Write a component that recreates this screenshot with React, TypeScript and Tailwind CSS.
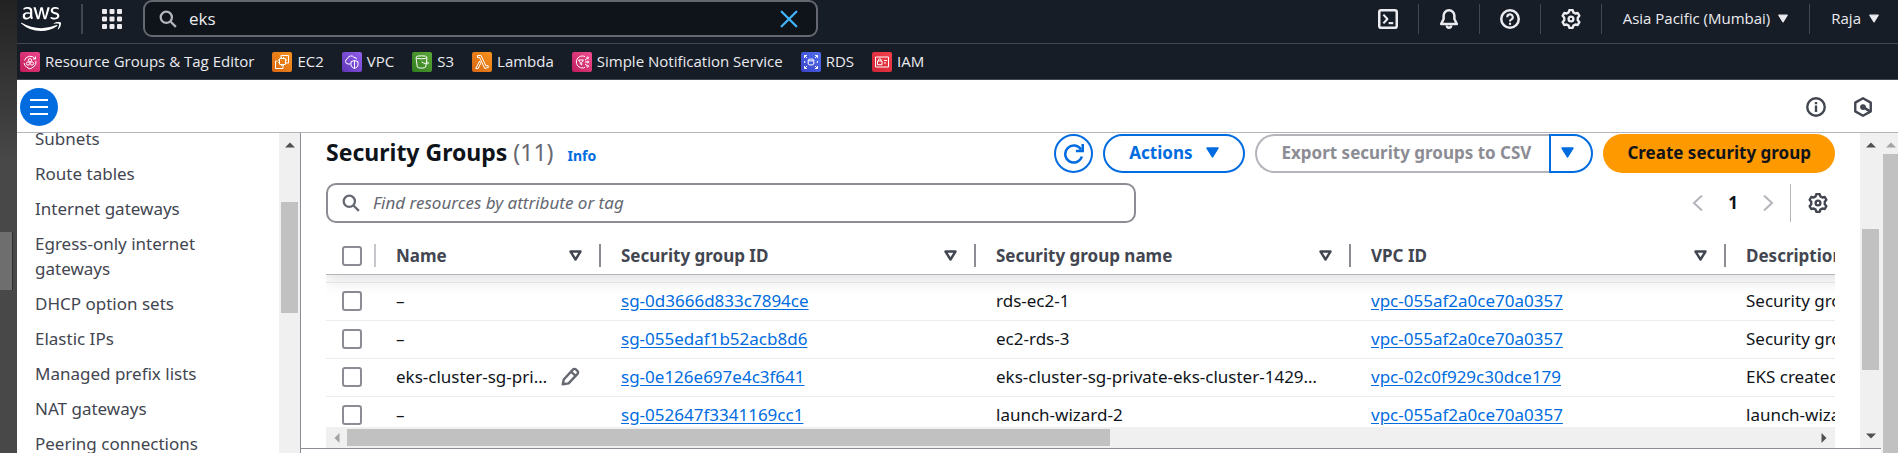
import React from "react";
import type { ReactNode } from "react";
import { FaAws } from "react-icons/fa";

type Favourite = { label: string; tile: string; glyph: ReactNode };

const favourites: Favourite[] = [
  {
    label: "Resource Groups & Tag Editor",
    tile: "bg-linear-to-tr from-[#c2185b] to-[#f0468c]",
    glyph: (
      <>
        <path d="M4.500 8.500A6 6 0 0 1 15.300 7M16 9a6 6 0 0 1-2.500 6L10 17l-3.500-2A6 6 0 0 1 4 11" />
        <path d="M15.500 4.500V7H13" />
        <circle cx="10" cy="8.200" r="1.600" />
        <circle cx="8" cy="11.500" r="1.600" />
        <circle cx="12" cy="11.500" r="1.600" />
      </>
    ),
  },
  {
    label: "EC2",
    tile: "bg-linear-to-tr from-[#d86613] to-[#f8931d]",
    glyph: (
      <>
        <rect x="7.500" y="6.500" width="6" height="6" rx="0.500" />
        <path d="M9 6.500v-3h7.500V11h-3M5.500 9h-2v7.500H11V13M9.500 5v1.500M11.500 5v1.500M6 8h1.500M6 10.500h1.500M9.500 12.500V14M11.500 12.500V14M13.500 8H15" />
      </>
    ),
  },
  {
    label: "VPC",
    tile: "bg-linear-to-tr from-[#5f35b8] to-[#9460ee]",
    glyph: (
      <>
        <path d="M8.500 12H6a2.700 2.700 0 0 1-.4-5.300A3.500 3.500 0 0 1 12 5.500a2 2 0 0 1 2.500 1.800" />
        <path d="M12.500 8.500l3.500 1.200V13c0 1.500-1.500 2.500-3.500 3.500C10.500 15.500 9 14.500 9 13V9.700zM12.500 8.500v8" />
      </>
    ),
  },
  {
    label: "S3",
    tile: "bg-linear-to-tr from-[#2e7d1e] to-[#5da83a]",
    glyph: (
      <>
        <ellipse cx="9.500" cy="5.300" rx="5.500" ry="1.500" />
        <path d="M4 5.500l1.300 9.500c1 1.500 7.400 1.500 8.400 0L15 5.500M9.500 10c2 1.300 6.500 2.500 7 1.300.2-.6-1-1.300-2-1.800" />
      </>
    ),
  },
  {
    label: "Lambda",
    tile: "bg-linear-to-tr from-[#d86613] to-[#f8931d]",
    glyph: <path d="M5.500 3.500H9l5 10.500 1.800-.6.700 1.900-3.700 1.200L8.300 7.200 7.700 5.500H5.500zM7.600 9.200l1 2.200-2.400 5.100H3.700z" />,
  },
  {
    label: "Simple Notification Service",
    tile: "bg-linear-to-tr from-[#bd1a5c] to-[#f34d92]",
    glyph: (
      <>
        <path d="M13 4.600a6 6 0 1 0 0 10.800M6.500 8h5l-1.800 2.500V13l-1.400-1v-1.500zM13 10h2M13 8l2-1.500M13 12l2 1.500" />
        <circle cx="15.700" cy="5.800" r="0.900" />
        <circle cx="15.900" cy="10" r="0.900" />
        <circle cx="15.700" cy="14.200" r="0.900" />
      </>
    ),
  },
  {
    label: "RDS",
    tile: "bg-linear-to-tr from-[#3a41c6] to-[#5371f2]",
    glyph: (
      <>
        <path d="M3.500 6V3.500H6M3.500 3.500L6 6M14 3.500h2.500V6M16.500 3.500L14 6M3.500 14v2.500H6M3.500 16.500L6 14M14 16.500h2.500V14M16.500 16.500L14 14M3.700 9v2M16.300 9v2" />
        <ellipse cx="10" cy="8" rx="2.800" ry="1" />
        <path d="M7.200 8v4c0 1.300 5.600 1.300 5.600 0V8" />
      </>
    ),
  },
  {
    label: "IAM",
    tile: "bg-linear-to-tr from-[#cf2334] to-[#f5404d]",
    glyph: (
      <>
        <rect x="3.500" y="5" width="13" height="10" />
        <rect x="5.500" y="9" width="4.500" height="3.700" />
        <path d="M6.500 9V8a1.300 1.300 0 0 1 2.600 0v1M12 8.500h3M12 11h2" />
      </>
    ),
  },
];

const sidebarLinks = [
  "Subnets",
  "Route tables",
  "Internet gateways",
  "Egress-only internet gateways",
  "DHCP option sets",
  "Elastic IPs",
  "Managed prefix lists",
  "NAT gateways",
  "Peering connections",
];

const groups = [
  { name: "–", id: "sg-0d3666d833c7894ce", group: "rds-ec2-1", vpc: "vpc-055af2a0ce70a0357", description: "Security group" },
  { name: "–", id: "sg-055edaf1b52acb8d6", group: "ec2-rds-3", vpc: "vpc-055af2a0ce70a0357", description: "Security group" },
  { name: "eks-cluster-sg-private", id: "sg-0e126e697e4c3f641", group: "eks-cluster-sg-private-eks-cluster-1429384", vpc: "vpc-02c0f929c30dce179", description: "EKS created" },
  { name: "–", id: "sg-052647f3341169cc1", group: "launch-wizard-2", vpc: "vpc-055af2a0ce70a0357", description: "launch-wizard-2" },
];

const columns = ["Name", "Security group ID", "Security group name", "VPC ID", "Description"];

function Icon({ children, className = "size-5" }: { children: ReactNode; className?: string }) {
  return (
    <svg viewBox="0 0 16 16" fill="none" stroke="currentColor" strokeWidth="2" strokeLinejoin="round" className={`shrink-0 ${className}`} aria-hidden="true">
      {children}
    </svg>
  );
}

function SearchIcon({ className }: { className?: string }) {
  return (
    <Icon className={className}>
      <circle cx="6.500" cy="6.500" r="5" />
      <path d="M10.200 10.200L15 15" />
    </Icon>
  );
}

function GearIcon() {
  return (
    <Icon>
      <g strokeWidth="1.900">
        <path d="M6.100 2.700L6.700.9h2.600l.6 1.800 1.600.9 1.900-.4 1.300 2.200L13.400 7v2l1.300 1.600-1.300 2.200-1.900-.4-1.600.9-.6 1.800H6.700l-.6-1.800-1.600-.9-1.900.4-1.300-2.200L2.600 9V7L1.300 5.400l1.300-2.200 1.900.4z" />
        <circle cx="8" cy="8" r="1.900" />
      </g>
    </Icon>
  );
}

function Caret({ className }: { className: string }) {
  return (
    <svg viewBox="0 0 12 10" className={`shrink-0 ${className}`} fill="currentColor" stroke="currentColor" strokeWidth="1.500" strokeLinejoin="round" aria-hidden="true">
      <path d="M1 1h10L6 9z" />
    </svg>
  );
}

function Arrow({ d, tone }: { d: string; tone: string }) {
  return (
    <svg viewBox="0 0 10 10" className={`size-[10px] shrink-0 ${tone}`} fill="currentColor" aria-hidden="true">
      <path d={d} />
    </svg>
  );
}

const UP = "M0 7.500L5 2.500L10 7.500z";
const DOWN = "M0 2.500L5 7.500L10 2.500z";
const LEFT = "M7.500 0L2.500 5L7.500 10z";
const RIGHT = "M2.500 0L7.500 5L2.500 10z";

function NavIcon({ label, children }: { label: string; children: ReactNode }) {
  return (
    <button type="button" aria-label={label} className="flex h-[30px] items-center border-r border-[#424650] px-5">
      {children}
    </button>
  );
}

function TopNav() {
  return (
    <header className="shrink-0 bg-[#161d26] font-['Open_Sans','Noto_Sans',sans-serif] text-[#ebebf0]">
      <div className="flex h-11 items-center border-b border-[#424650] pb-[6px]">
        <a href="#home" aria-label="AWS home" className="ml-1 text-white">
          <FaAws className="h-9 w-10" />
        </a>
        <div className="ml-5 h-[30px] w-[2px] bg-[#424650]" />
        <button type="button" aria-label="Services" className="ml-[19px]">
          <svg viewBox="0 0 20 20" className="size-5" fill="currentColor" aria-hidden="true">
            {[0, 7.5, 15].map((y) => [0, 7.5, 15].map((x) => <rect key={`${x}-${y}`} x={x} y={y} width="5" height="5" rx="1" />))}
          </svg>
        </button>
        <div className="ml-[21px] flex h-[37px] w-[675px] items-center rounded-[9px] border-2 border-[#656871] bg-[#0f141a] pr-[18px] pl-[14px]">
          <SearchIcon className="size-[18px] text-[#b4b4bb]" />
          <input aria-label="Search" defaultValue="eks" className="ml-3 min-w-0 flex-1 bg-transparent text-[17px] leading-6 outline-none" />
          <button type="button" aria-label="Clear search" className="text-[#42b4ff]">
            <Icon className="size-[18px]">
              <path d="M1.500 1.500l13 13M14.500 1.500l-13 13" strokeLinecap="round" />
            </Icon>
          </button>
        </div>
        <div className="ml-auto flex items-center text-[15px]">
          <NavIcon label="CloudShell">
            <Icon>
              <rect x="1" y="1" width="14" height="14" rx="1.500" />
              <path d="M4.300 4.500L7.500 8l-3.200 3.500" strokeWidth="1.700" />
              <path d="M8.500 11.300h3.700" strokeWidth="1.700" />
            </Icon>
          </NavIcon>
          <NavIcon label="Notifications">
            <Icon>
              <path d="M8 1a4.300 4.300 0 0 0-4.300 4.300V8L1.700 12h12.600l-2-4V5.300A4.300 4.300 0 0 0 8 1z" />
              <path d="M6.300 13.200a1.700 1.700 0 0 0 3.400 0" />
            </Icon>
          </NavIcon>
          <NavIcon label="Help">
            <Icon>
              <circle cx="8" cy="8" r="7" />
              <path d="M5.800 6.600A2.200 2.200 0 1 1 8.900 8.500C8.200 8.800 8 9.100 8 9.900" strokeWidth="1.700" />
              <path d="M8 11v1.700" strokeWidth="1.700" />
            </Icon>
          </NavIcon>
          <NavIcon label="Settings">
            <GearIcon />
          </NavIcon>
          <button type="button" className="flex h-[30px] items-center gap-2 border-r border-[#424650] px-[21px]">
            Asia Pacific (Mumbai)
            <Caret className="h-[9px] w-[10px]" />
          </button>
          <button type="button" className="flex h-[30px] items-center gap-2 pr-[19px] pl-[21px]">
            Raja
            <Caret className="h-[9px] w-[10px]" />
          </button>
        </div>
      </div>
      <nav aria-label="Favourites" className="flex h-9 items-center gap-[18px] border-b border-[#424650] pl-[3px] text-[15px]">
        {favourites.map((f) => (
          <a key={f.label} href="#service" className="flex items-center gap-[5px] whitespace-nowrap">
            <span className={`size-5 rounded-[2px] ${f.tile}`}>
              <svg viewBox="0 0 20 20" className="size-5 text-white" fill="none" stroke="currentColor" strokeWidth="1" strokeLinejoin="round" aria-hidden="true">
                {f.glyph}
              </svg>
            </span>
            {f.label}
          </a>
        ))}
      </nav>
    </header>
  );
}

function ToolBar() {
  return (
    <div className="flex h-[53px] shrink-0 items-center border-b border-[#b4b4bb] pt-px pr-[25px] pl-[3px]">
      <button type="button" aria-label="Open navigation" className="flex size-[38px] items-center justify-center rounded-full bg-[#006ce0] text-white">
        <svg viewBox="0 0 18 16" className="h-4 w-[18px]" fill="currentColor" aria-hidden="true">
          <path d="M0 0h18v2H0zM0 7h18v2H0zM0 14h18v2H0z" />
        </svg>
      </button>
      <button type="button" aria-label="Information" className="ml-auto text-[#424650]">
        <Icon>
          <circle cx="8" cy="8" r="7" strokeWidth="1.900" />
          <path d="M8 6.800v5.200M8 4v1.700" strokeWidth="1.900" />
        </Icon>
      </button>
      <button type="button" aria-label="Shortcuts" className="ml-[27px] text-[#424650]">
        <Icon>
          <path d="M8 1l6.200 3.500v7L8 15l-6.200-3.500v-7z" strokeWidth="1.900" />
          <circle cx="8" cy="8" r="1.800" fill="currentColor" strokeWidth="1" />
          <path d="M8.500 8.300l4.800 3" />
        </Icon>
      </button>
    </div>
  );
}

function Sidebar() {
  return (
    <aside className="flex w-[284px] shrink-0 overflow-hidden border-r border-[#8c8c94]">
      <nav aria-label="VPC" className="-mt-[7px] flex w-[262px] shrink-0 flex-col gap-[10px] pr-16 pl-[18px] text-[17px] leading-[25px] text-[#424650]">
        {sidebarLinks.map((link) => (
          <a key={link} href="#section">
            {link}
          </a>
        ))}
      </nav>
      <div aria-hidden="true" className="flex w-[21px] flex-col items-center bg-[#f0f0f0] pt-[7px]">
        <Arrow d={UP} tone="text-[#505050]" />
        <div className="mt-[52px] h-[111px] w-[17px] bg-[#c1c1c1]" />
      </div>
    </aside>
  );
}

function Checkbox({ label }: { label: string }) {
  return <input type="checkbox" aria-label={label} className="block size-5 appearance-none rounded-[3px] border-2 border-[#8c8c94] bg-white" />;
}

function Heading() {
  return (
    <div className="flex items-start justify-between">
      <div className="flex items-baseline">
        <h1 className="text-[23px] leading-9 font-bold text-[#0f141a]">
          Security Groups <span className="font-normal text-[#656871]">(11)</span>
        </h1>
        <a href="#info" className="ml-[14px] text-[14px] font-bold text-[#006ce0]">
          Info
        </a>
      </div>
      <div className="flex gap-[10px] text-[17px] font-bold">
        <button type="button" aria-label="Refresh" className="flex size-[39px] items-center justify-center rounded-full border-2 border-[#006ce0] text-[#006ce0]">
          <Icon>
            <path d="M14.300 10A6.800 6.800 0 1 1 13.600 4.500" />
            <path d="M9.500 5.500H15V0" strokeLinejoin="miter" />
          </Icon>
        </button>
        <button type="button" className="flex h-[39px] items-center gap-[14px] rounded-full border-2 border-[#006ce0] px-6 pb-[2px] text-[#006ce0]">
          Actions
          <Caret className="h-[11px] w-[13px]" />
        </button>
        <div className="flex">
          <button type="button" disabled className="h-[39px] rounded-l-full border-2 border-r-0 border-[#b4b4bb] pr-[18px] pb-[2px] pl-6 text-[#8c8c94]">
            Export security groups to CSV
          </button>
          <button type="button" aria-label="More export options" className="flex h-[39px] w-11 items-center rounded-r-full border-2 border-[#006ce0] pb-[2px] pl-[10px] text-[#006ce0]">
            <Caret className="h-[11px] w-[13px]" />
          </button>
        </div>
        <button type="button" className="h-[39px] rounded-full bg-[#ff9900] px-6 pb-[2px] text-[#0f141a]">
          Create security group
        </button>
      </div>
    </div>
  );
}

function FilterRow() {
  return (
    <div className="mt-[10px] flex items-center justify-between">
      <label className="flex h-10 w-[810px] items-center gap-[13px] rounded-[10px] border-2 border-[#8c8c94] pl-[14px] text-[#656871]">
        <SearchIcon className="size-[18px]" />
        <input aria-label="Find resources" placeholder="Find resources by attribute or tag" className="min-w-0 flex-1 text-[17px] outline-none placeholder:text-[#656871] placeholder:italic" />
      </label>
      <div className="flex items-center pr-[7px] text-[#424650]">
        <button type="button" aria-label="Previous page" disabled className="text-[#b4b4bb]">
          <Icon className="size-4">
            <path d="M12 .5L4 8l8 7.500" strokeLinejoin="miter" />
          </Icon>
        </button>
        <button type="button" className="w-[54px] text-[17px] font-bold text-[#0f141a]">
          1
        </button>
        <button type="button" aria-label="Next page" disabled className="text-[#b4b4bb]">
          <Icon className="size-4">
            <path d="M4 .5L12 8l-8 7.500" strokeLinejoin="miter" />
          </Icon>
        </button>
        <div className="mr-[17px] ml-[14px] h-[38px] w-px bg-[#b4b4bb]" />
        <button type="button" aria-label="Preferences">
          <GearIcon />
        </button>
      </div>
    </div>
  );
}

function GroupsTable() {
  return (
    <div className="min-h-0 flex-1 overflow-hidden">
      <table className="w-[1775px] table-fixed border-separate border-spacing-0 text-left text-[17px] leading-6 text-[#0f141a]">
        <colgroup>
          <col className="w-[50px]" />
          <col className="w-[225px]" />
          <col className="w-[375px]" />
          <col className="w-[375px]" />
          <col className="w-[375px]" />
          <col className="w-[375px]" />
        </colgroup>
        <thead className="relative z-10 bg-white shadow-[0_4px_16px_1px_rgba(0,7,22,0.12)]">
          <tr>
            <th className="border-b border-[#b4b4bb] pt-[21px] pb-[7px] pl-4">
              <div className="flex h-[23px] items-center justify-between border-r-2 border-[#c6c6cd]">
                <Checkbox label="Select all" />
              </div>
            </th>
            {columns.map((column) => (
              <th key={column} className="border-b border-[#b4b4bb] pt-[21px] pb-[7px] pl-5 font-bold text-[#424650]">
                <div className="flex h-[23px] items-center justify-between border-r-2 border-[#8c8c94] pr-[17px]">
                  {column}
                  <svg viewBox="0 0 13 11" className="h-[11px] w-[13px]" fill="none" stroke="currentColor" strokeWidth="2.400" strokeLinejoin="round" aria-hidden="true">
                    <path d="M1.500 1.500h10L6.500 9.500z" />
                  </svg>
                </div>
              </th>
            ))}
          </tr>
        </thead>
        <tbody>
          <tr aria-hidden="true">
            <td colSpan={6} className="h-2 border-b border-[#ebebf0] p-0" />
          </tr>
          {groups.map((g) => (
            <tr key={g.id}>
              <td className="h-[38px] border-b border-[#ebebf0] pt-0 pb-[2px] pl-4">
                <Checkbox label={`Select ${g.id}`} />
              </td>
              <td className="border-b border-[#ebebf0] pt-0 pr-4 pb-[2px] pl-5">
                <div className="flex items-center gap-[8px]">
                  <span className="w-[157px] truncate">{g.name}</span>
                  {g.name !== "–" && (
                    <button type="button" aria-label="Edit name" className="text-[#656871]">
                      <Icon className="size-[19px]">
                        <path d="M1.500 14.500l.8-4 7.700-8.300c.7-.8 1.700-.9 2.500-.2l1.300 1.200c.8.7.8 1.800.1 2.600l-7.500 8z" />
                        <path d="M8.500 4l3.800 3.500" />
                      </Icon>
                    </button>
                  )}
                </div>
              </td>
              <td className="border-b border-[#ebebf0] pt-0 pb-[2px] pl-5">
                <a href="#group" className="text-[#006ce0] underline underline-offset-2">
                  {g.id}
                </a>
              </td>
              <td className="truncate border-b border-[#ebebf0] pt-0 pr-[25px] pb-[2px] pl-5">{g.group}</td>
              <td className="border-b border-[#ebebf0] pt-0 pb-[2px] pl-5">
                <a href="#vpc" className="text-[#006ce0] underline underline-offset-2">
                  {g.vpc}
                </a>
              </td>
              <td className="truncate border-b border-[#ebebf0] pt-0 pb-[2px] pl-5">{g.description}</td>
            </tr>
          ))}
        </tbody>
      </table>
    </div>
  );
}

export default function App() {
  return (
    <div className="flex h-screen overflow-hidden bg-white font-['Noto_Sans','Open_Sans',sans-serif]">
      <div aria-hidden="true" className="w-[17px] shrink-0 bg-linear-to-b from-[#222222] via-[#484848] via-35% to-[#484848] pt-[232px]">
        <div className="h-[58px] w-[13px] border-r border-[#2e2e2e] bg-[#6e6e6e]" />
      </div>
      <div className="flex min-w-0 flex-1 flex-col">
        <TopNav />
        <ToolBar />
        <div className="flex min-h-0 flex-1">
          <Sidebar />
          <div className="flex min-w-0 flex-1 flex-col pb-1">
            <div className="flex min-h-0 flex-1 border-b border-[#8c8c94]">
              <main className="flex min-w-0 flex-1 flex-col px-[25px] pt-px">
                <Heading />
                <FilterRow />
                <GroupsTable />
                <div aria-hidden="true" className="flex h-[21px] shrink-0 items-center bg-[#f0f0f0] px-[6px]">
                  <Arrow d={LEFT} tone="text-[#a3a3a3]" />
                  <div className="ml-[5px] h-[17px] w-[763px] bg-[#c1c1c1]" />
                  <span className="ml-auto flex">
                    <Arrow d={RIGHT} tone="text-[#505050]" />
                  </span>
                </div>
              </main>
              <div aria-hidden="true" className="flex w-[21px] shrink-0 flex-col items-center bg-[#f0f0f0] py-[7px]">
                <Arrow d={UP} tone="text-[#505050]" />
                <div className="mt-[79px] mb-auto h-[141px] w-[17px] bg-[#c1c1c1]" />
                <Arrow d={DOWN} tone="text-[#505050]" />
              </div>
            </div>
          </div>
          <div aria-hidden="true" className="flex w-[17px] shrink-0 flex-col items-center bg-[#f0f0f0] pt-[7px] pl-[2px]">
            <Arrow d={UP} tone="text-[#a3a3a3]" />
            <div className="mt-1 w-full flex-1 bg-[#c1c1c1]" />
          </div>
        </div>
      </div>
    </div>
  );
}
